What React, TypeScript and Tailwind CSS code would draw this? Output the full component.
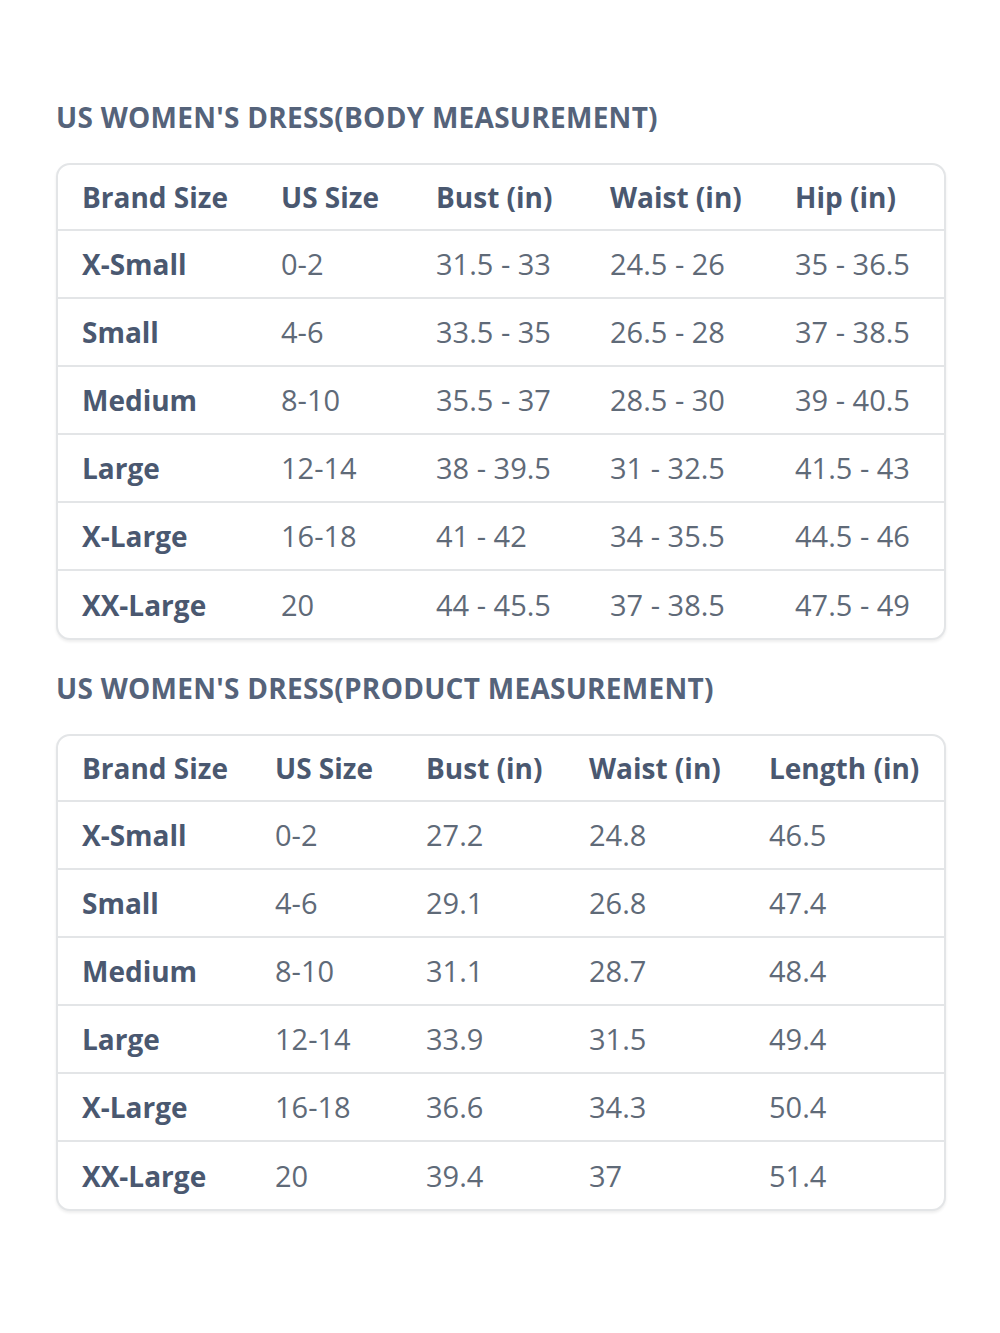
import React from "react";

type Table = {
  title: string;
  cols: string;
  headers: string[];
  rows: string[][];
};

const tables: Table[] = [
  {
    title: "US WOMEN'S DRESS(BODY MEASUREMENT)",
    cols: "grid-cols-[199px_155px_174px_185px_1fr]",
    headers: ["Brand Size", "US Size", "Bust (in)", "Waist (in)", "Hip (in)"],
    rows: [
      ["X-Small", "0-2", "31.5 - 33", "24.5 - 26", "35 - 36.5"],
      ["Small", "4-6", "33.5 - 35", "26.5 - 28", "37 - 38.5"],
      ["Medium", "8-10", "35.5 - 37", "28.5 - 30", "39 - 40.5"],
      ["Large", "12-14", "38 - 39.5", "31 - 32.5", "41.5 - 43"],
      ["X-Large", "16-18", "41 - 42", "34 - 35.5", "44.5 - 46"],
      ["XX-Large", "20", "44 - 45.5", "37 - 38.5", "47.5 - 49"],
    ],
  },
  {
    title: "US WOMEN'S DRESS(PRODUCT MEASUREMENT)",
    cols: "grid-cols-[193px_151px_163px_180px_1fr]",
    headers: ["Brand Size", "US Size", "Bust (in)", "Waist (in)", "Length (in)"],
    rows: [
      ["X-Small", "0-2", "27.2", "24.8", "46.5"],
      ["Small", "4-6", "29.1", "26.8", "47.4"],
      ["Medium", "8-10", "31.1", "28.7", "48.4"],
      ["Large", "12-14", "33.9", "31.5", "49.4"],
      ["X-Large", "16-18", "36.6", "34.3", "50.4"],
      ["XX-Large", "20", "39.4", "37", "51.4"],
    ],
  },
];

function SizeTable({ t, first }: { t: Table; first: boolean }) {
  return (
    <div className={first ? "" : "mt-[25px]"}>
      <h2 className="h-[46px] flex items-center text-[28px] font-bold tracking-[0.27px] text-[#55637a] whitespace-nowrap">
        {t.title}
      </h2>
      <div className="mt-[23px] rounded-[14px] border-2 border-[#e3e5e7] bg-white shadow-[0_2px_3px_rgba(0,0,0,0.07)] overflow-hidden">
        <div className={`grid ${t.cols} h-[66px] items-center pl-[24px] border-b-2 border-[#e3e5e7]`}>
          {t.headers.map((h) => (
            <div key={h} className="text-[28px] font-bold text-[#4a5870] whitespace-nowrap">
              {h}
            </div>
          ))}
        </div>
        {t.rows.map((r, i) => (
          <div
            key={i}
            className={`grid ${t.cols} items-center pl-[24px] ${
              i < t.rows.length - 1 ? "h-[68px] border-b-2 border-[#e3e5e7]" : "h-[67px]"
            }`}
          >
            {r.map((c, j) => (
              <div
                key={j}
                className={`whitespace-nowrap ${
                  j === 0
                    ? "text-[28px] font-bold text-[#4a5870]"
                    : "text-[29px] font-medium text-[#5f6a78]"
                }`}
              >
                {c}
              </div>
            ))}
          </div>
        ))}
      </div>
    </div>
  );
}

export default function App() {
  return (
    <div
      className="w-[1000px] h-[1333px] bg-white pt-[94px] pl-[56px] pr-[54px]"
      style={{ fontFamily: '"Open Sans", "Noto Sans", sans-serif' }}
    >
      {tables.map((t, i) => (
        <SizeTable key={i} t={t} first={i === 0} />
      ))}
    </div>
  );
}
